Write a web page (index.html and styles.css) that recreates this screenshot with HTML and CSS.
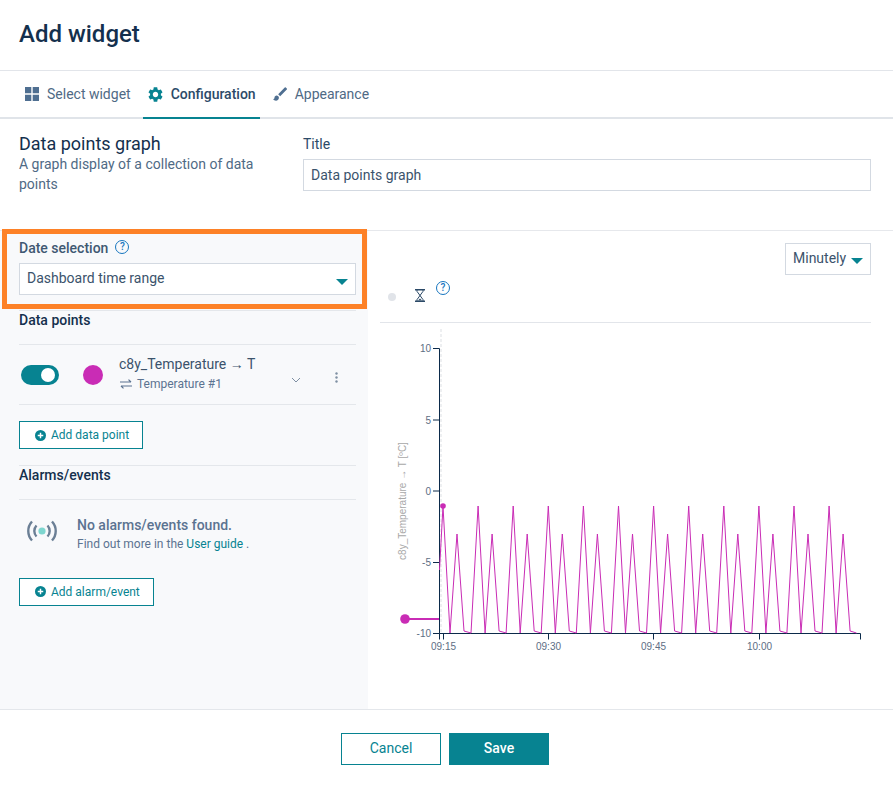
FILE: index.html
```html
<!DOCTYPE html>
<html>

<head>
  <title>Add widget</title>
  <link rel="stylesheet" href="styles.css">
</head>

<body>
  <header class="modalHeader">
    <h1>Add widget</h1>
  </header>

  <nav class="tabs">
    <a class="tab">
      <svg class="tabIcon" viewBox="0 0 14 14"><path d="M0 0h6.3v6.3H0zM7.7 0H14v6.3H7.7zM0 7.7h6.3V14H0zM7.7 7.7H14V14H7.7z" /></svg>
      Select widget
    </a>
    <a class="tab active">
      <svg class="tabIcon" viewBox="2 2 20 20"><path d="M19.14 12.94c.04-.3.06-.61.06-.94 0-.32-.02-.64-.07-.94l2.03-1.58a.49.49 0 0 0 .12-.61l-1.92-3.32a.488.488 0 0 0-.59-.22l-2.39.96c-.5-.38-1.03-.7-1.62-.94l-.36-2.54a.484.484 0 0 0-.48-.41h-3.84c-.24 0-.43.17-.47.41l-.36 2.54c-.59.24-1.13.57-1.62.94l-2.39-.96c-.22-.08-.47 0-.59.22L2.74 8.87c-.12.21-.08.47.12.61l2.03 1.58c-.05.3-.09.63-.09.94s.02.64.07.94l-2.03 1.58a.49.49 0 0 0-.12.61l1.92 3.32c.12.22.37.29.59.22l2.39-.96c.5.38 1.03.7 1.62.94l.36 2.54c.05.24.24.41.48.41h3.84c.24 0 .44-.17.47-.41l.36-2.54c.59-.24 1.13-.56 1.62-.94l2.39.96c.22.08.47 0 .59-.22l1.92-3.32c.12-.22.07-.47-.12-.61l-2.01-1.58zM12 15.6c-1.98 0-3.6-1.62-3.6-3.6s1.62-3.6 3.6-3.6 3.6 1.62 3.6 3.6-1.62 3.6-3.6 3.6z" /></svg>
      Configuration
    </a>
    <a class="tab">
      <svg class="tabIcon" viewBox="2 3 19 18"><path d="M7 14c-1.66 0-3 1.34-3 3 0 1.31-1.16 2-2 2 .92 1.22 2.49 2 4 2 2.21 0 4-1.79 4-4 0-1.66-1.34-3-3-3zm13.71-9.37l-1.34-1.34a.996.996 0 0 0-1.41 0L9 12.25 11.75 15l8.96-8.96a.996.996 0 0 0 0-1.41z" /></svg>
      Appearance
    </a>
  </nav>

  <section class="intro">
    <div class="introText">
      <h2>Data points graph</h2>
      <p>A graph display of a collection of data points</p>
    </div>
    <div class="introField">
      <label class="fieldLabel">Title</label>
      <input class="textInput" type="text" value="Data points graph">
    </div>
  </section>

  <main class="config">
    <aside class="sidePanel">
      <div class="fieldLabel withHelp">Date selection <span class="help">?</span></div>
      <div class="selectBox">Dashboard time range <span class="caret"></span></div>

      <h3 class="sectionTitle first">Data points</h3>
      <div class="dataPoint">
        <span class="toggle"><span class="toggleKnob"></span></span>
        <span class="colorDot"></span>
        <div class="dataPointText">
          <div class="dataPointName">c8y_Temperature → T</div>
          <div class="dataPointDevice">
            <svg class="transferIcon" viewBox="0 0 12 10"><path d="M0 3h11M8.5 .6 11 3M12 7H1M3.5 9.4 1 7" /></svg>
            Temperature #1
          </div>
        </div>
        <svg class="chevron" viewBox="0 0 10 6"><path d="M1 1l4 4 4-4" /></svg>
        <svg class="dots" viewBox="0 0 3 11"><circle cx="1.5" cy="1.5" r="1.2" /><circle cx="1.5" cy="5.5" r="1.2" /><circle cx="1.5" cy="9.5" r="1.2" /></svg>
      </div>
      <button class="addButton pointButton">
        <svg class="plusIcon" viewBox="0 0 12 12"><circle cx="6" cy="6" r="6" /><path d="M6 3v6M3 6h6" /></svg>
        Add data point
      </button>

      <h3 class="sectionTitle">Alarms/events</h3>
      <div class="emptyState">
        <svg class="alarmIcon" viewBox="0 0 30 22">
          <path d="M9.5 5.5a8 8 0 0 0 0 11M20.5 5.5a8 8 0 0 1 0 11M5 1.5a14 14 0 0 0 0 19M25 1.5a14 14 0 0 1 0 19" />
          <circle cx="15" cy="11" r="3.6" />
        </svg>
        <div>
          <div class="emptyTitle">No alarms/events found.</div>
          <div class="emptyHint">Find out more in the <a class="link">User guide</a> .</div>
        </div>
      </div>
      <button class="addButton alarmButton">
        <svg class="plusIcon" viewBox="0 0 12 12"><circle cx="6" cy="6" r="6" /><path d="M6 3v6M3 6h6" /></svg>
        Add alarm/event
      </button>
    </aside>

    <section class="preview">
      <div class="previewTop">
        <div class="intervalButton">Minutely <span class="caret"></span></div>
      </div>
      <div class="legend">
        <span class="legendDot"></span>
        <svg class="hourglass" viewBox="0 0 10 13"><path class="caps" d="M0 .8h10M0 12.2h10" /><path d="M2 .8v1.6L8 10.6v1.6M8 .8v1.6L2 10.6v1.6" /><path class="sand" d="M3 11.6h4L5 9.4z" /></svg>
        <span class="help">?</span>
      </div>

      <!-- viewBox uses page coordinates so the chart numbers read straight off the screenshot -->
      <svg class="chart" viewBox="380 323 491 386">
        <line class="cursor" x1="441" y1="329" x2="441" y2="633" />

        <g class="axis">
          <path d="M433 348.5h6.5V633.5H433M433 420h6M433 491h6M433 562.5h6" />
          <path d="M439.5 633.5H860.5M439.5 633.5v6M443.5 633.5v6M548.5 633.5v6M653.5 633.5v6M759.5 633.5v6M860.5 633.5v6" />
        </g>

        <g class="tickY">
          <text x="431" y="352">10</text>
          <text x="431" y="424">5</text>
          <text x="431" y="495">0</text>
          <text x="431" y="566">-5</text>
          <text x="431" y="637">-10</text>
        </g>
        <g class="tickX">
          <text x="443.5" y="650">09:15</text>
          <text x="548.5" y="650">09:30</text>
          <text x="653.5" y="650">09:45</text>
          <text x="759.5" y="650">10:00</text>
        </g>
        <text class="axisLabel" transform="translate(405.5 501) rotate(-90)">c8y_Temperature → T [ºC]</text>

        <polyline class="series" points="439.5,570 443,506 450,633 457,534 464,631 471,633
          478.1,506 485.1,633 492.1,534 499.1,631 506.1,633
          513.2,506 520.2,633 527.2,534 534.2,631 541.2,633
          548.3,506 555.3,633 562.3,534 569.3,631 576.3,633
          583.4,506 590.4,633 597.4,534 604.4,631 611.4,633
          618.5,506 625.5,633 632.5,534 639.5,631 646.5,633
          653.6,506 660.6,633 667.6,534 674.6,631 681.6,633
          688.7,506 695.7,633 702.7,534 709.7,631 716.7,633
          723.8,506 730.8,633 737.8,534 744.8,631 751.8,633
          758.9,506 765.9,633 772.9,534 779.9,631 786.9,633
          794,506 801,633 808,534 815,631 822,633
          829.1,506 836.1,633 843.1,534 850.1,631 856.5,633" />
        <circle class="seriesMark" cx="443" cy="506" r="2.8" />
        <line class="rangeLine" x1="405" y1="619" x2="439" y2="619" />
        <circle class="seriesMark" cx="405" cy="619" r="4.8" />
      </svg>
    </section>
  </main>

  <footer class="modalFooter">
    <button class="footerButton cancel">Cancel</button>
    <button class="footerButton save">Save</button>
  </footer>

  <div class="highlight"></div>
</body>

</html>
```

FILE: styles.css
```css
* {
  box-sizing: border-box;
}

body {
  margin: 0;
  background: #ffffff;
  color: #3b536c;
  font: 14px/20px Roboto, "Liberation Sans", sans-serif;
}

h1,
h2,
h3,
p {
  margin: 0;
}

.modalHeader {
  height: 71px;
  padding: 19px 19px 0;
  border-bottom: 1px solid #e2e5ea;
}

.modalHeader h1 {
  color: #14304d;
  font-size: 24px;
  font-weight: 500;
  line-height: 30px;
}

.tabs {
  display: flex;
  height: 48px;
  padding-left: 20px;
  gap: 7px;
  border-bottom: 2px solid #e0e4e9;
}

.tab {
  display: flex;
  align-items: center;
  gap: 8px;
  height: 48px;
  padding: 0 5px;
  color: #4f6a85;
  border-bottom: 2px solid transparent;
}

.tab.active {
  margin-right: 1px;
  padding-right: 4px;
  color: #2c4a68;
  font-weight: 500;
  border-bottom-color: #078391;
}

.tabIcon {
  width: 14px;
  height: 14px;
  fill: #4f6f91;
}

.tab.active .tabIcon {
  width: 15px;
  height: 15px;
  fill: #078391;
}

.intro {
  display: flex;
  height: 112px;
  padding: 15px 22px 0 19px;
  border-bottom: 1px solid #e6e8ec;
}

.introText {
  width: 284px;
  padding-right: 30px;
  flex: none;
}

.introText h2 {
  color: #14304d;
  font-size: 18px;
  font-weight: 400;
  line-height: 20px;
}

.introText p {
  color: #4f6a85;
}

.introField {
  flex: 1;
}

.fieldLabel {
  display: block;
  margin-bottom: 5px;
  color: #2c4a68;
}

.textInput,
.selectBox {
  display: block;
  width: 100%;
  height: 32px;
  padding: 0 7px;
  background: #ffffff;
  border: 1px solid #d3d9e1;
  color: #3b536c;
  font: 14px/28px Roboto, sans-serif;
}

.selectBox {
  position: relative;
}

.caret {
  display: inline-block;
  width: 0;
  height: 0;
  border-top: 6px solid #078391;
  border-left: 6px solid transparent;
  border-right: 6px solid transparent;
}

.selectBox .caret {
  position: absolute;
  right: 7px;
  top: 15px;
}

.config {
  display: flex;
  height: 478px;
}

.sidePanel {
  width: 368px;
  flex: none;
  padding: 7px 12px 0 19px;
  background: #f8f9fb;
}

.withHelp {
  display: flex;
  align-items: flex-start;
  gap: 7px;
  font-weight: 500;
  color: #3f5872;
}

.help {
  display: block;
  width: 14px;
  height: 14px;
  margin-top: 2px;
  border: 1px solid #1776bf;
  border-radius: 50%;
  color: #1776bf;
  font: 500 10px/12px Roboto, sans-serif;
  text-align: center;
}

.sectionTitle {
  padding: 0 0 14px;
  border-top: 1px solid #e4e7eb;
  color: #14304d;
  font-size: 14px;
  font-weight: 500;
  line-height: 19px;
}

.sectionTitle.first {
  margin-top: 15px;
}

.dataPoint {
  display: flex;
  align-items: center;
  height: 61px;
  padding-left: 2px;
  border-top: 1px solid #e4e7eb;
  border-bottom: 1px solid #e4e7eb;
}

.toggle {
  display: flex;
  align-items: center;
  justify-content: flex-end;
  width: 38px;
  height: 20px;
  padding-right: 4px;
  border-radius: 10px;
  background: #078391;
}

.toggleKnob {
  width: 14px;
  height: 14px;
  border-radius: 50%;
  background: #ffffff;
}

.colorDot {
  width: 20px;
  height: 20px;
  margin-left: 24px;
  border-radius: 50%;
  background: #c92cb5;
}

.dataPointText {
  width: 169px;
  margin-left: 16px;
}

.dataPointName {
  line-height: 19px;
}

.dataPointDevice {
  display: flex;
  align-items: center;
  gap: 5px;
  color: #5b7391;
  font-size: 12px;
  line-height: 20px;
}

.transferIcon {
  width: 12px;
  height: 10px;
  margin-left: 1px;
  fill: none;
  stroke: #5b7391;
  stroke-width: 1.2;
}

.chevron {
  width: 10px;
  height: 6px;
  margin: 10px 0 0 3px;
  fill: none;
  stroke: #7f90a3;
  stroke-width: 1;
}

.dots {
  width: 3px;
  height: 11px;
  margin: 6px 0 0 34px;
  fill: #7f90a3;
}

.addButton {
  display: inline-flex;
  align-items: center;
  gap: 5px;
  height: 28px;
  padding: 0 13px 0 15px;
  background: #ffffff;
  border: 1px solid #078391;
  border-radius: 0;
  color: #078391;
  font: 12px Roboto, sans-serif;
}

.pointButton {
  display: flex;
  margin: 16px 0;
}

.alarmButton {
  padding-bottom: 1px;
}

.plusIcon {
  width: 11px;
  height: 11px;
  fill: #078391;
  stroke: #ffffff;
  stroke-width: 1.6;
}

.plusIcon circle {
  stroke: none;
}

.emptyState {
  display: flex;
  padding: 15px 0 0 8px;
  height: 79px;
  gap: 20px;
  border-top: 1px solid #e4e7eb;
}

.alarmIcon {
  width: 30px;
  height: 22px;
  margin-top: 5px;
  fill: none;
  stroke: #6b7f95;
  stroke-width: 2.4;
}

.alarmIcon circle {
  fill: #7ed6cf;
  stroke: none;
}

.emptyTitle {
  color: #5b7391;
  font-weight: 500;
}

.emptyHint {
  color: #5b7391;
  font-size: 12px;
  line-height: 18px;
}

.link {
  color: #078391;
}

.preview {
  flex: 1;
  padding: 12px 22px 0 12px;
}

.previewTop {
  display: flex;
  justify-content: flex-end;
}

.intervalButton {
  display: flex;
  align-items: center;
  gap: 5px;
  width: 86px;
  height: 32px;
  padding: 0 7px 2px;
  border: 1px solid #d3d9e1;
}

.intervalButton .caret {
  margin-top: 6px;
}

.legend {
  display: flex;
  align-items: flex-start;
  height: 48px;
  padding-left: 8px;
  border-bottom: 1px solid #e2e5ea;
}

.legendDot {
  width: 8px;
  height: 8px;
  margin-top: 18px;
  border-radius: 50%;
  background: #e1e4e9;
}

.hourglass {
  width: 10px;
  height: 13px;
  margin: 14px 0 0 19px;
  fill: none;
  stroke: #2c4a68;
  stroke-width: 1;
}

.hourglass .caps {
  stroke-width: 1.6;
}

.hourglass .sand {
  fill: #2c4a68;
  stroke: none;
}

.legend .help {
  margin: 6px 0 0 11px;
}

.chart {
  display: block;
  width: 491px;
  height: 386px;
}

.cursor {
  stroke: #dcdfe3;
  stroke-dasharray: 3 2;
}

.axis path {
  fill: none;
  stroke: #0b2a4a;
  stroke-width: 1;
}

.tickY text,
.tickX text,
.axisLabel {
  font: 10px "Liberation Sans", sans-serif;
}

.tickY text,
.tickX text {
  fill: #5d6e84;
}

.tickY text {
  text-anchor: end;
}

.tickX text,
.axisLabel {
  text-anchor: middle;
}

.axisLabel {
  fill: #a8a8a8;
}

.series {
  fill: none;
  stroke: #c92cb5;
  stroke-width: 1;
}

.seriesMark {
  fill: #c92cb5;
}

.rangeLine {
  stroke: #c92cb5;
  stroke-width: 2;
}

.modalFooter {
  display: flex;
  justify-content: center;
  gap: 8px;
  height: 76px;
  padding: 23px 3px 0 0;
  border-top: 1px solid #e4e7eb;
}

.footerButton {
  width: 100px;
  height: 32px;
  padding: 0 0 2px;
  border: 1px solid #078391;
  border-radius: 0;
  font: 14px Roboto, sans-serif;
}

.cancel {
  background: #ffffff;
  color: #078391;
}

.save {
  background: #078391;
  color: #ffffff;
  font-weight: 500;
}

/* orange annotation drawn over the screenshot */
.highlight {
  position: absolute;
  left: 2px;
  top: 229px;
  width: 365px;
  height: 80px;
  border: 5px solid #fd8127;
}
```
